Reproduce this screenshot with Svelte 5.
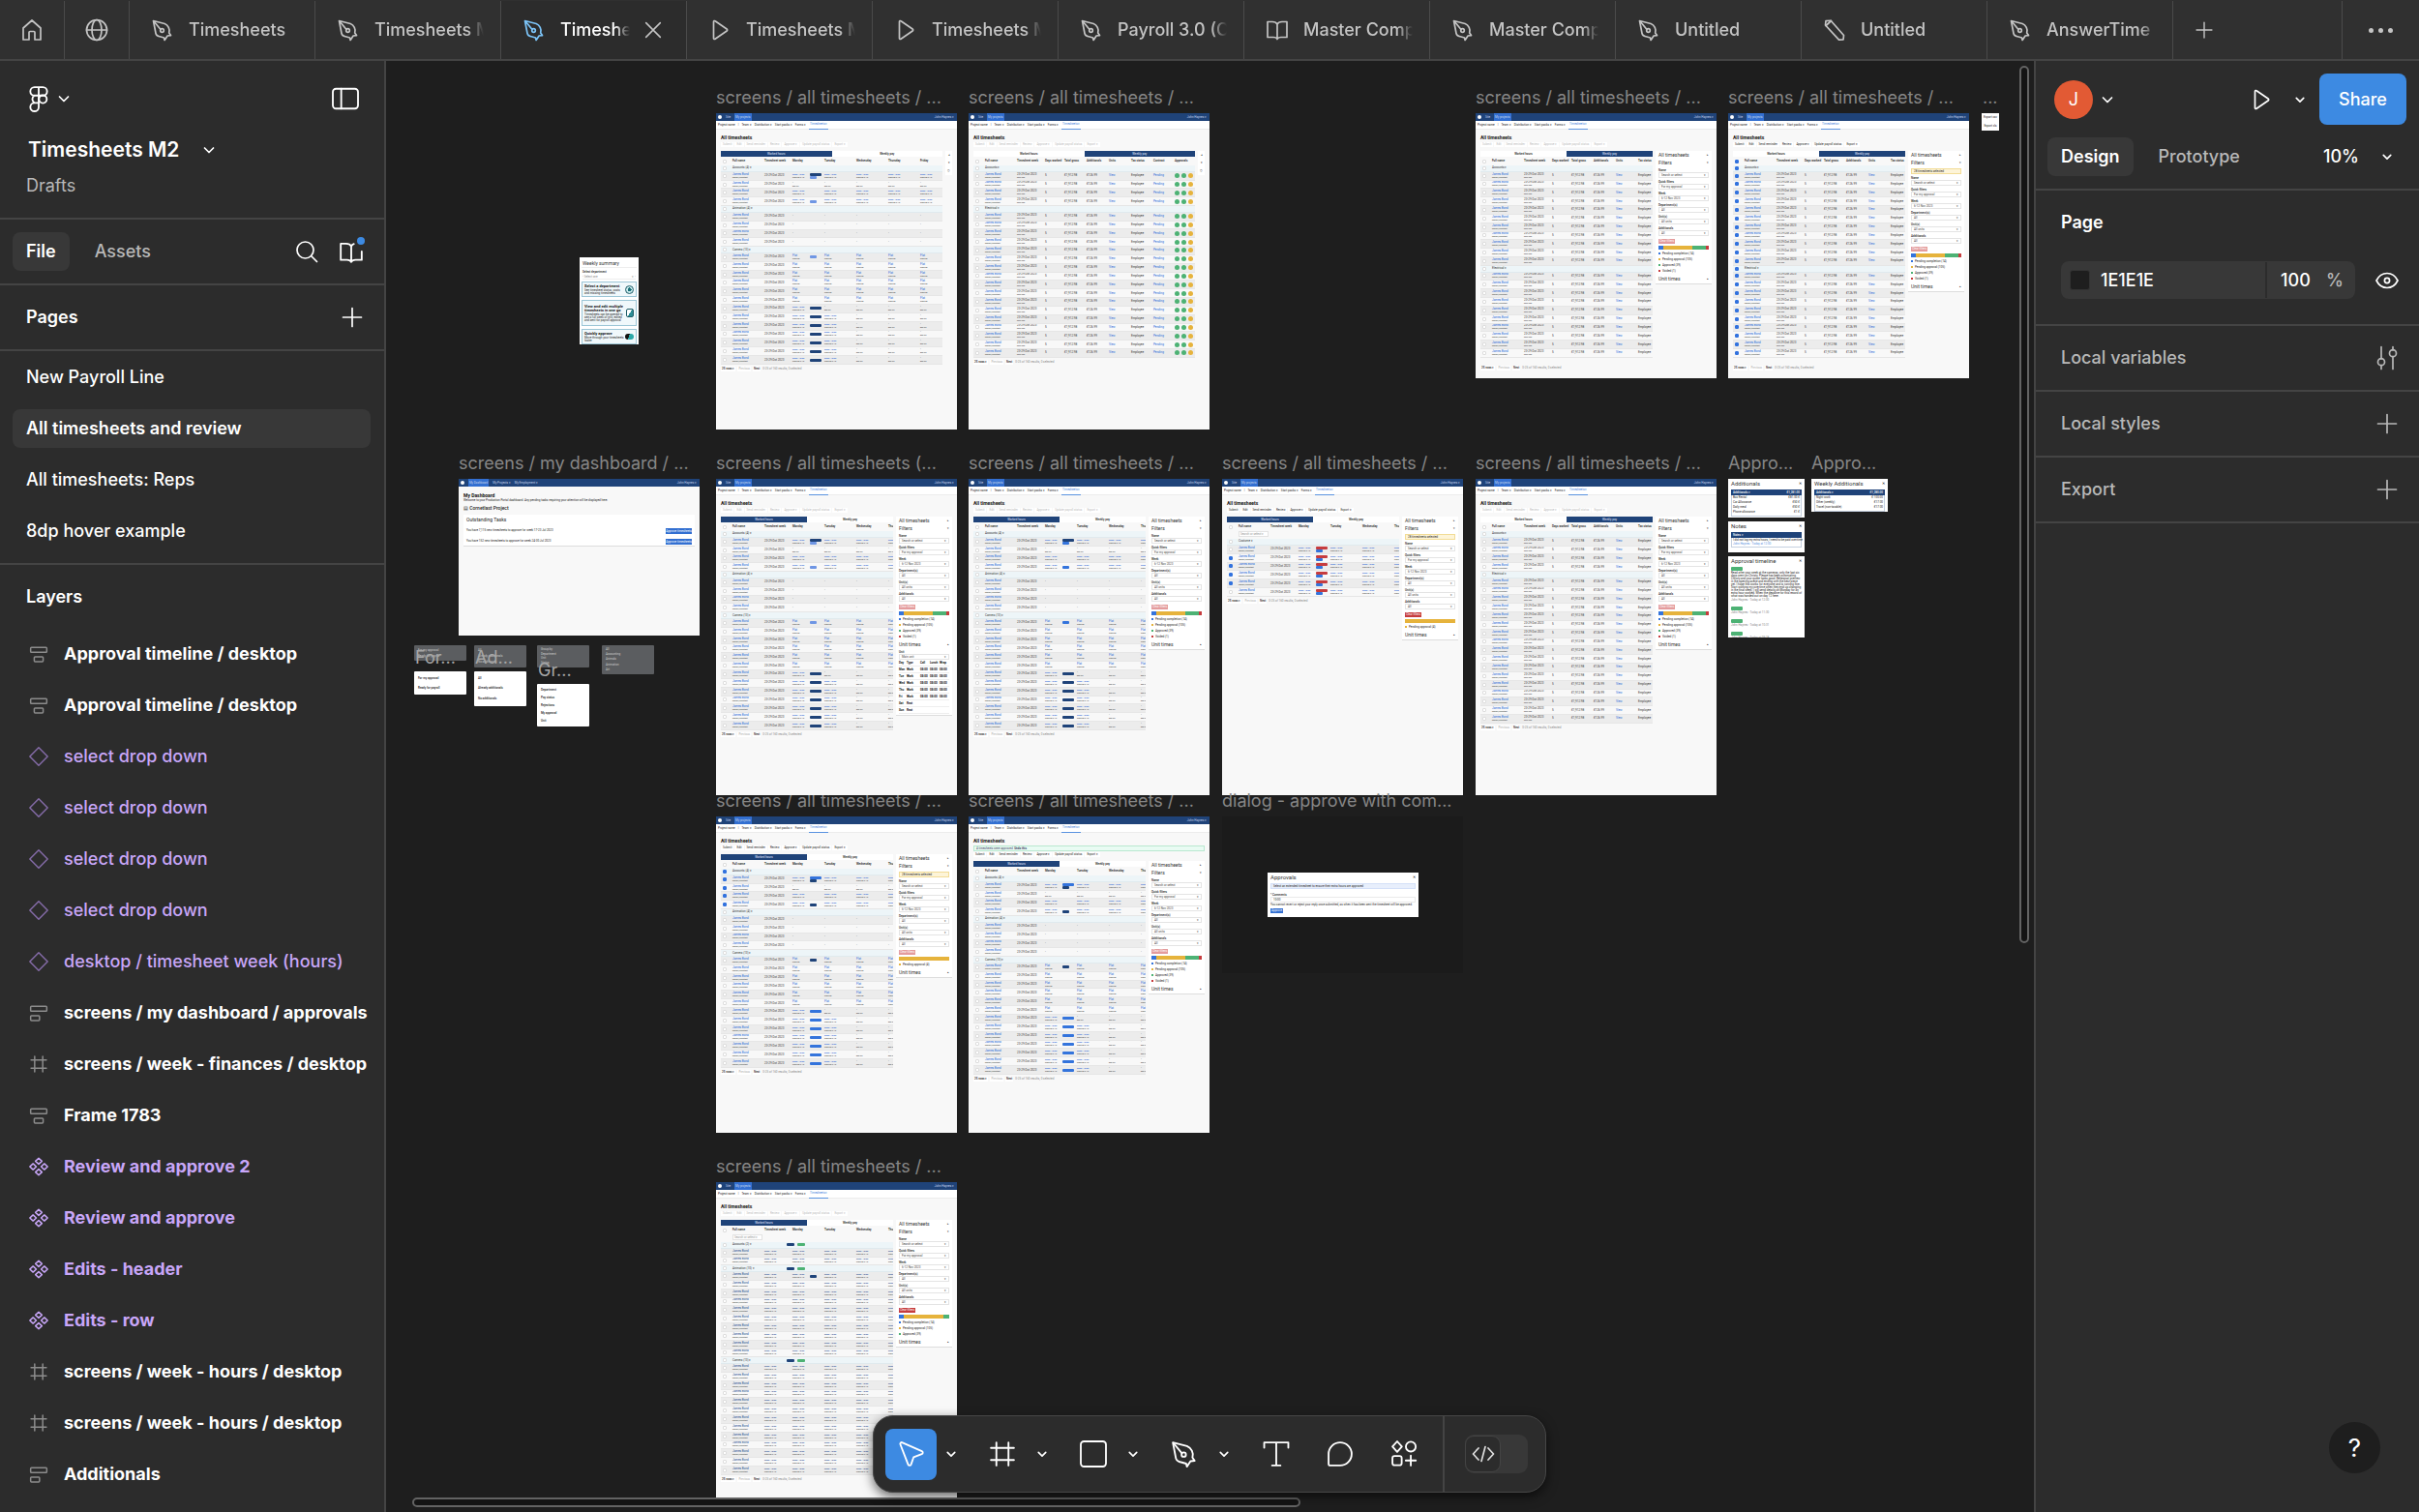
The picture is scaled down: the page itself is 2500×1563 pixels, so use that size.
<script>
  const tabs = [
    { icon: 'pen', label: 'Timesheets' },
    { icon: 'pen', label: 'Timesheets M2' },
    { icon: 'pen', label: 'Timesheets M2', active: true },
    { icon: 'play', label: 'Timesheets M2' },
    { icon: 'play', label: 'Timesheets M2' },
    { icon: 'pen', label: 'Payroll 3.0 (Copy)' },
    { icon: 'book', label: 'Master Components' },
    { icon: 'pen', label: 'Master Components' },
    { icon: 'pen', label: 'Untitled' },
    { icon: 'pencil', label: 'Untitled' },
    { icon: 'pen', label: 'AnswerTime' }
  ];

  const pages = ['New Payroll Line', 'All timesheets and review', 'All timesheets: Reps', '8dp hover example'];
  let currentPage = $state(1);

  const layers = [
    { icon: 'stackCenter', label: 'Approval timeline / desktop', kind: 'frame' },
    { icon: 'stackCenter', label: 'Approval timeline / desktop', kind: 'frame' },
    { icon: 'diamond', label: 'select drop down', kind: 'instance' },
    { icon: 'diamond', label: 'select drop down', kind: 'instance' },
    { icon: 'diamond', label: 'select drop down', kind: 'instance' },
    { icon: 'diamond', label: 'select drop down', kind: 'instance' },
    { icon: 'diamond', label: 'desktop / timesheet week (hours)', kind: 'instance' },
    { icon: 'stackLeft', label: 'screens / my dashboard / approvals', kind: 'frame' },
    { icon: 'hash', label: 'screens / week - finances / desktop', kind: 'frame' },
    { icon: 'stackCenter', label: 'Frame 1783', kind: 'frame' },
    { icon: 'component', label: 'Review and approve 2', kind: 'component' },
    { icon: 'component', label: 'Review and approve', kind: 'component' },
    { icon: 'component', label: 'Edits - header', kind: 'component' },
    { icon: 'component', label: 'Edits - row', kind: 'component' },
    { icon: 'hash', label: 'screens / week - hours / desktop', kind: 'frame' },
    { icon: 'hash', label: 'screens / week - hours / desktop', kind: 'frame' },
    { icon: 'stackLeft', label: 'Additionals', kind: 'frame' }
  ];

  const rep = (n, row) => Array.from({ length: n }, () => ({ ...row }));

  const hourGroups = (tone, small, checked = false) => [
    {
      name: 'Accounts (4)', checked,
      rows: [
        { kind: 'full', badges: [tone, small], checked },
        { kind: 'off', checked },
        { kind: 'full', checked },
        { kind: 'full', badges: [small], short: true, checked }
      ]
    },
    { name: 'Animation (4)', rows: rep(4, { kind: 'empty' }) },
    {
      name: 'Camera (13)',
      rows: [
        { kind: 'flat', badges: [small], short: true },
        ...rep(5, { kind: 'flat' }),
        { kind: 'first', badges: [tone] },
        ...rep(6, { kind: 'second', badges: [tone] })
      ]
    }
  ];
  const payGroups = (a, b, checked = false) => [
    { name: 'Accounts', checked, rows: rep(a, { kind: 'pay', checked }) },
    { name: 'Electrical', checked, rows: rep(b, { kind: 'pay', checked }) }
  ];

  const allLegend = [
    { tone: 'blue', text: 'Pending completion (14)', size: 9 },
    { tone: 'amber', text: 'Pending approval (105)', size: 59 },
    { tone: 'green', text: 'Approved (39)', size: 26 },
    { tone: 'red', text: 'Voided (1)', size: 6 }
  ];
  const amberLegend = [{ tone: 'amber', text: 'Pending approval (4)', size: 100 }];

  const title = 'screens / all timesheets / ...';
  const screens = [
    { x: 341, y: 54, h: 327, title, mode: 'hours', wide: true, groups: hourGroups('navy', 'soft'), rowsHeight: 206 },
    { x: 602, y: 54, h: 327, title, mode: 'pay', wide: true, groups: payGroups(4, 17), rowsHeight: 199 },
    { x: 1126, y: 54, h: 274, title, mode: 'pay', groups: payGroups(11, 10), rowsHeight: 199, legend: allLegend, low: true },
    { x: 1387, y: 54, h: 274, title, mode: 'pay', groups: payGroups(11, 10, true), rowsHeight: 199, legend: allLegend, low: true, enabled: true, notice: true },
    { x: 341, y: 432, h: 327, title: 'screens / all timesheets (...', mode: 'hours', groups: hourGroups('navy', 'soft'), rowsHeight: 206, legend: allLegend, units: true },
    { x: 602, y: 432, h: 327, title, mode: 'hours', groups: hourGroups('navy', 'blue'), rowsHeight: 206, legend: allLegend },
    {
      x: 864, y: 432, h: 327, title, mode: 'hours', enabled: true, notice: true, legend: amberLegend, clear: true, search: true, rowsHeight: 60,
      groups: [{
        name: 'Costume',
        rows: [0, 1, 1, 1, 1, 0].map((c) => ({ kind: 'full', badges: ['red', 'blue'], checked: !!c }))
      }]
    },
    { x: 1126, y: 432, h: 327, title, mode: 'pay', groups: payGroups(4, 17), rowsHeight: 199, legend: allLegend },
    { x: 341, y: 781, h: 327, title, mode: 'hours', groups: hourGroups('blue', 'navy', true), rowsHeight: 206, legend: amberLegend, enabled: true, notice: true },
    { x: 602, y: 781, h: 327, title, mode: 'hours', groups: hourGroups('blue', 'navy'), rowsHeight: 206, legend: allLegend, enabled: true, success: true },
    {
      x: 341, y: 1159, h: 327, title, mode: 'hours', search: true, clear: true, rowsHeight: 241,
      legend: [{ ...allLegend[0] }, { ...allLegend[1], size: 79 }, { ...allLegend[2], size: 12 }],
      groups: [
        { name: 'Accounts (2)', tags: true, rows: rep(2, { kind: 'edit' }) },
        { name: 'Animation (10)', tags: true, rows: [{ kind: 'edit', badges: ['navy'], short: true }, ...rep(9, { kind: 'edit' })] },
        { name: 'Camera (13)', tags: true, rows: rep(13, { kind: 'edit' }) }
      ]
    }
  ];

  const hourHeads = ['Full name', 'Timesheet week', 'Monday', '', 'Tuesday', 'Wednesday', 'Thursday', 'Friday'];
  const payHeads = ['Full name', 'Timesheet week', 'Days worked', 'Total gross', 'Additionals', 'Units', 'Tax status', 'Contract', 'Approvals'];
  const fields = [
    ['Name', 'Search or select'],
    ['Quick filters', 'For my approval'],
    ['Week', '6-12 Nov 2023'],
    ['Department(s)', 'All'],
    ['Unit(s)', 'All units'],
    ['Additionals', 'All']
  ];
  const actions = ['Submit', 'Edit', 'Send reminder', 'Review', 'Approve ▾', 'Update payroll status', 'Export ▾'];

  const menus = [
    { x: 29, y: 604, h: 16, dark: true, items: ['For my approval', 'Ready for payroll'] },
    { x: 91, y: 604, h: 23, dark: true, items: ['All', 'Already additionals', 'No additionals'] },
    { x: 156, y: 604, h: 23, dark: true, items: ['Group by', 'Department', 'Unit', 'Status'] },
    { x: 223, y: 604, h: 30, dark: true, items: ['All', 'Accounting', 'Animals', 'Animation', 'Art'] },
    { x: 29, y: 631, h: 24, items: ['For my approval', 'Ready for payroll'] },
    { x: 91, y: 631, h: 36, items: ['All', 'Already additionals', 'No additionals'] },
    { x: 156, y: 644, h: 44, items: ['Department', 'Pay status', 'Rejections', 'My approval', 'Unit'] }
  ];

  const canvasLabels = [
    { x: 30, y: 605, text: 'For...', over: true },
    { x: 92, y: 605, text: 'Ad...', over: true },
    { x: 157, y: 618, text: 'Gr...', over: true },
    { x: 75, y: 404, text: 'screens / my dashboard / ...' },
    { x: 864, y: 753, text: 'dialog - approve with com...' },
    { x: 1387, y: 404, text: 'Appro...' },
    { x: 1473, y: 404, text: 'Appro...' },
    { x: 1650, y: 26, text: '...' }
  ];

  const icons = {
    pen: '<path d="M2.5 2.5 5 15.500c.3 1.700 2 3 5 3.500l3.500 1 .6 2.500 3-4.500 3.400-.4-1.800-2.600c1.300-4-1-8-4.500-9.500z"/><path d="m3 3 7 8.500"/><circle cx="11.500" cy="12.500" r="1.800"/>',
    play: '<path d="M5.500 3.500v17a1 1 0 0 0 1.600.8l12-8.300a1.200 1.200 0 0 0 0-2l-12-8.300a1 1 0 0 0-1.600.8z"/>',
    book: '<path d="M12 6c-1-2-3-2.500-5-2.500H2v16h6c2 0 3.500.7 4 2 .5-1.300 2-2 4-2h6v-16h-5c-2 0-4 .5-5 2.500zM12 6v15"/>',
    bookNew: '<path d="M12 7c-1-2-3-2.500-5-2.500H2V20h6c2 0 3.500.7 4 2 .5-1.300 2-2 4-2h6v-8M12 7v15M12 7c.6-1.200 1.400-1.900 2.500-2.200"/>',
    pencil: '<path d="m3 2.500 5-.2 13.500 15.200-.5 4.500-4.500.2L2.500 7z"/><path d="M3 7.500 8.500 2.500"/>',
    home: '<path d="M3 10 12 2l9 8v12h-6v-7.500a1 1 0 0 0-1-1h-4a1 1 0 0 0-1 1V22H3z"/>',
    globe: '<circle cx="12" cy="12" r="10.500"/><ellipse cx="12" cy="12" rx="5" ry="10.500"/><path d="M1.500 12h21"/>',
    close: '<path d="m4 4 16 16M20 4 4 20"/>',
    plus: '<path d="M12 2.500v19M2.500 12h19"/>',
    chevron: '<path d="m7.500 10 4.500 4.500 4.500-4.500"/>',
    figma: '<path d="M12 1H8a4 4 0 0 0 0 8h4zM12 1h4a4 4 0 0 1 0 8h-4zM12 9H8a4 4 0 0 0 0 7h4zM8 16a4 4 0 1 0 4 4v-4z"/><circle cx="16" cy="12.500" r="3.700"/>',
    panel: '<rect x="0" y="2.500" width="24" height="19" rx="3"/><path d="M8 2.500v19"/>',
    search: '<circle cx="10.500" cy="10.500" r="8.500"/><path d="m17 17 5.500 5.500"/>',
    stackCenter: '<rect x="2" y="4" width="20" height="6" rx="1"/><rect x="6.500" y="15.500" width="11" height="6" rx="1"/>',
    stackLeft: '<rect x="2" y="4" width="20" height="6" rx="1"/><rect x="2" y="15.500" width="11" height="6" rx="1"/>',
    diamond: '<path d="M12 1 23 12 12 23 1 12z"/>',
    hash: '<path d="M7 2.500v19M17 2.500v19M2.500 7h19M2.500 17h19"/>',
    component: '<path d="m12 1.500 4 3.700-4 3.700-4-3.700zM12 15.100l4 3.700-4 3.700-4-3.700zM5 8.300 9 12l-4 3.700L1 12zM19 8.300l4 3.700-4 3.700L15 12z"/>',
    eye: '<path d="M1 12C3.500 7 7.500 4.500 12 4.500S20.500 7 23 12c-2.500 5-6.500 7.500-11 7.500S3.500 17 1 12z"/><circle cx="12" cy="12" r="2.600"/>',
    sliders: '<path d="M6 .5v12.500M6 19.500v4M18 .5v3.500M18 10.500v13"/><circle cx="6" cy="16.200" r="3.500"/><circle cx="18" cy="7.200" r="3.500"/>',
    cursor: '<path d="M1.500 3.200 8.800 22a1.500 1.500 0 0 0 2.800 0L14 15.200l7.800-3a1.500 1.500 0 0 0 .1-2.800L3.500 1.300a1.400 1.400 0 0 0-2 1.900z"/>',
    rect: '<rect x="0" y="0" width="24" height="24" rx="3"/>',
    type: '<path d="M.5 6V1h23v5M12 1v22M8 23h8"/>',
    comment: '<path d="M1 21.500V12A11 11 0 1 1 12 23H2.500A1.500 1.500 0 0 1 1 21.500z"/>',
    shapes: '<path d="m5.500 0 4.500 5-4.500 5-4.500-5zM18.500 13.500V23M13.700 18.200h9.600"/><circle cx="18.500" cy="5" r="4.700"/><rect x="1" y="14" width="8.800" height="8.800" rx="2"/>',
    code: '<path d="M7 6 1.500 12 7 18M17 6l5.500 6-5.500 6M14 4.500l-4 15"/>'
  };
</script>

{#snippet icon(name, size = 'm')}
  <svg class="icon {size}" viewBox="0 0 24 24" aria-hidden="true">{@html icons[name]}</svg>
{/snippet}

{#snippet times(kind)}
  {#if kind === 'full'}
    <b class="link slot">08:00 - 18:00</b><i>£200.00 x 1.0</i>
  {:else if kind === 'flat'}
    <b class="link">Flat</b><i>£200.00</i>
  {:else if kind === 'off'}
    <b>-</b><i>Day off</i>
  {:else}
    <b>-</b>
  {/if}
{/snippet}

{#snippet screen(s)}
  <article class="node screen" style="left:{s.x}px;top:{s.y}px;height:{s.h}px">
    <div class="s-nav"><span class="logo"></span><span>Site</span><span class="on">My projects</span><span class="who">John Haynes ▾</span></div>
    <div class="s-sub"><span>Project name</span><span>|</span><span>Team ▾</span><span>Distribution ▾</span><span>Start packs ▾</span><span>Forms ▾</span><span class="on">Timesheets ▾</span></div>
    <div class="s-title">All timesheets</div>
    {#if s.success}<div class="s-success">4 timesheets were approved. <b>Undo this</b></div>{/if}
    <div class="s-actions" class:enabled={s.enabled}>{#each actions as a}<span>{a}</span>{/each}</div>
    <div class="s-body">
      <div class="s-main">
        <div class="s-tabs"><span class:on={s.mode === 'hours'}>Worked hours</span><span class:on={s.mode === 'pay'}>Weekly pay</span></div>
        <div class="s-row head {s.mode}">
          <span class="box" class:checked={s.groups[1]?.checked}></span>
          {#each (s.mode === 'pay' ? payHeads : hourHeads).slice(0, s.wide ? 9 : 7) as h}<span class="cell">{h}</span>{/each}
        </div>
        {#if s.search}<div class="s-search"><span>Search or select ▾</span></div>{/if}
        <div class="s-rows" style="height:{s.rowsHeight}px">
          {#each s.groups as g}
            <div class="s-row group {s.mode}">
              <span class="box" class:checked={g.checked}></span><span class="cell">{g.name} ▾</span>
              {#if g.tags}<span class="cell"></span><span class="cell tags"><em class="badge navy"></em><em class="badge green"></em></span>{/if}
            </div>
            {#each g.rows as r, i}
              <div class="s-row line {s.mode}" class:odd={i % 2 === 0} class:deep={r.kind === 'edit'}>
                <span class="box" class:checked={r.checked}></span>
                <span class="cell"><b class="link">James Bond</b><i>Runner/Assistant</i></span>
                {#if r.kind === 'pay'}
                  <span class="cell"><b>23-29 Oct 2023</b><i>Mon-Sun</i></span>
                  <span class="cell"><b>5</b></span>
                  <span class="cell"><b>£1,912.98</b></span>
                  <span class="cell"><b>£126.99</b></span>
                  <span class="cell"><b class="link">View</b></span>
                  <span class="cell"><b>Employee</b></span>
                  {#if s.wide}
                    <span class="cell"><b class="link">Pending</b></span>
                    <span class="cell dots"><em></em><em></em><em class="amber"></em></span>
                  {/if}
                {:else}
                  <span class="cell">{#if r.kind === 'edit'}{@render times('full')}{:else}<b>23-29 Oct 2023</b>{/if}</span>
                  <span class="cell">{@render times(r.kind === 'first' || r.kind === 'second' || r.kind === 'edit' ? 'full' : r.kind)}</span>
                  <span class="cell">{#each r.badges ?? [] as b, n}<em class="badge {b}" class:short={r.short || n > 0}></em>{/each}</span>
                  <span class="cell">{@render times(r.kind === 'second' || r.kind === 'edit' ? 'full' : r.kind === 'first' ? 'off' : r.kind)}</span>
                  {#each s.wide ? [0, 1, 2] : [0, 1] as d}
                    <span class="cell">{@render times(r.kind === 'edit' ? 'full' : r.kind === 'first' || r.kind === 'second' ? 'off' : r.kind)}</span>
                  {/each}
                {/if}
              </div>
            {/each}
          {/each}
        </div>
        <div class="s-foot" class:low={s.low}><span>25 rows ▾</span><span class="dim">Previous</span><span>Next</span><small>0-25 of 160 results, 0 selected</small></div>
      </div>
      {#if s.wide}
        <div class="s-strip"><span>◂</span><span>▾</span><span>◷</span></div>
      {:else}
        <div class="s-side">
          <div class="s-h">All timesheets<span>▸</span></div>
          <div class="s-h">Filters<span>▾</span></div>
          {#if s.notice}<div class="s-notice">28 timesheets selected</div>{/if}
          {#each fields as f}
            <div class="s-field"><b>{f[0]}</b><span>{f[1]}<u>▾</u></span></div>
          {/each}
          <div class="s-clear" class:strong={s.clear}>Clear filters</div>
          <div class="s-bar">{#each s.legend as l}<span class={l.tone} style="flex-grow:{l.size}"></span>{/each}</div>
          {#each s.legend as l}<div class="s-legend"><span class={l.tone}></span>{l.text}</div>{/each}
          <div class="s-h last">Unit times<span>▴</span></div>
          {#if s.units}
            <div class="s-field"><b>Unit</b><span>Main unit<u>▾</u></span></div>
            <div class="s-units">
              {#each ['Day', 'Mon', 'Tue', 'Wed', 'Thu', 'Fri', 'Sat', 'Sun'] as d, i}
                <div><b>{d}</b><b>{i === 0 ? 'Type' : i > 5 ? 'Rest' : 'Work'}</b>{#each ['Call', 'Lunch', 'Wrap'] as c}<span>{i === 0 ? c : i > 5 ? '' : '08:00'}</span>{/each}</div>
              {/each}
            </div>
          {/if}
        </div>
      {/if}
    </div>
  </article>
{/snippet}

<div class="app">
  <header class="tabbar">
    <button class="square" aria-label="Home">{@render icon('home')}</button>
    <button class="square" aria-label="Community">{@render icon('globe')}</button>
    {#each tabs as t}
      <div class="tab" class:active={t.active}>
        <button class="tab-open">{@render icon(t.icon)}<span>{t.label}</span></button>
        {#if t.active}<button class="tab-close" aria-label="Close tab">{@render icon('close')}</button>{/if}
      </div>
    {/each}
    <button class="new-tab" aria-label="New tab">{@render icon('plus', 's')}</button>
    <button class="more" aria-label="More"><span></span><span></span><span></span></button>
  </header>

  <aside class="left">
    <section class="file-head">
      <div class="bar">
        <button class="main-menu" aria-label="Main menu">{@render icon('figma', 'l')}{@render icon('chevron')}</button>
        <button aria-label="Toggle sidebar">{@render icon('panel', 'l')}</button>
      </div>
      <button class="file-name">Timesheets M2 {@render icon('chevron')}</button>
      <a class="drafts" href="#drafts">Drafts</a>
    </section>
    <section class="switch">
      <button class="pill on">File</button>
      <button class="pill">Assets</button>
      <span class="grow"></span>
      <button aria-label="Search">{@render icon('search')}</button>
      <button class="libraries" aria-label="Libraries">{@render icon('bookNew', 'l')}<span class="dot"></span></button>
    </section>
    <section class="pages-head">
      <h2>Pages</h2>
      <button aria-label="Add page">{@render icon('plus')}</button>
    </section>
    <nav class="pages">
      {#each pages as p, i}
        <button class="page" class:on={i === currentPage} onclick={() => (currentPage = i)}>{p}</button>
      {/each}
    </nav>
    <section class="layers">
      <h2>Layers</h2>
      {#each layers as l}
        <button class="layer {l.kind}">{@render icon(l.icon, 's')}<span>{l.label}</span></button>
      {/each}
    </section>
  </aside>

  <main class="canvas">
    {#each screens as s}
      <div class="node label" style="left:{s.x}px;top:{s.y - 28}px">{s.title}</div>
    {/each}
    {#each screens as s}{@render screen(s)}{/each}

    <article class="node dash">
      <div class="s-nav"><span class="logo"></span><span class="on">My Dashboard</span><span>My Projects ▾</span><span>My Employment ▾</span><span class="who">John Haynes ▾</span></div>
      <div class="d-body">
        <h3>My Dashboard</h3>
        <p>Welcome to your Production Portal dashboard. Any pending tasks requiring your attention will be displayed here.</p>
        <h4>▤ Cornetlast Project</h4>
        <div class="d-card">
          <h5>Outstanding Tasks</h5>
          <div><span>You have 7,115 new timesheets to approve for week 17-23 Jul 2023</span><b>Approve timesheets</b></div>
          <div><span>You have 152 new timesheets to approve for week 24-30 Jul 2023</span><b>Approve timesheets</b></div>
        </div>
      </div>
    </article>

    <article class="node weekly">
      <h3>Weekly summary</h3>
      <b>Select department</b>
      <div class="w-select">‹ Select one<span>▾ ›</span></div>
      <div class="w-card"><div><strong>Select a department</strong><p>See timesheet status, costs and missing timesheets</p></div><span class="w-art one"></span></div>
      <div class="w-card tall"><div><strong>View and edit multiple timesheets in one go</strong><p>Timesheets can be opened to see a full week of info, edited and sent for payroll approval</p></div><span class="w-art two"></span></div>
      <div class="w-card"><div><strong>Quickly approve</strong><p>Move through your timesheets faster</p></div><span class="w-art three"></span></div>
    </article>

    <article class="node export"><span>Export csv</span><span>Export xls</span></article>

    {#each menus as m}
      <article class="node menu" class:dark={m.dark} style="left:{m.x}px;top:{m.y}px;height:{m.h}px">
        {#each m.items as it}<span>{it}</span>{/each}
      </article>
    {/each}

    <article class="node card additionals">
      <h3>Additionals<span>✕</span></h3>
      <div class="c-table"><div class="top"><b>Additionals ▾</b><b>£1,281.00</b></div><div><span>Box Rental</span><span>£81.00 £</span></div><div><span>Car Allowance</span><span>£50 £</span></div><div><span>Daily meal</span><span>£50 £</span></div><div><span>Phone allowance</span><span>£1 £</span></div></div>
    </article>
    <article class="node card weekly-additionals">
      <h3>Weekly Additionals<span>✕</span></h3>
      <div class="c-table"><div class="top"><b>Additionals ▾</b><b>£1,280.00</b></div><div><span>Night work</span><span>£ 100.00</span></div><div><span>Other (weekly)</span><span>£17.00</span></div><div><span>Travel (non-taxable)</span><span>£17.00</span></div></div>
    </article>
    <article class="node card notes">
      <h3>Notes<span>✕</span></h3>
      <div class="c-table"><div class="top"><b>Notes ▾</b></div><div><span>I did not log my extra hours, I need to be paid overtime</span></div><div class="meta"><span>John Haynes · Today at 12:00</span></div></div>
    </article>
    <article class="node card timeline">
      <h3>Approval timeline<span>✕</span></h3>
      <em class="badge green"></em>
      <p class="note">Read after your week at the cameras, only the last six days went on Christy. Please has been automating Christy and your quote looks good. Rehearsal preview in the opening scene and ending with the best piece yet. I hope this works for everyone and is running fine. Start working my overtime when they end up changing in the final week, I will send details on Monday for an extra hour worked. When the deadline for this record of what was handed out on day 12 here.</p>
      <p>John Haynes · Today at 12:00</p>
      <em class="badge green"></em><p>John Haynes · Today at 11:30</p>
      <em class="badge green"></em><p>John Haynes · Today at 10:31</p>
      <em class="badge green"></em><p>John Haynes · Today at 09:18</p>
    </article>

    <div class="node backdrop"></div>
    <article class="node dialog">
      <h3>Approvals<span>✕</span></h3>
      <div class="g-note">Select an extended timesheet to ensure their extra hours are approved</div>
      <b>* Comments</b>
      <div class="g-input">10:00</div>
      <p>You cannot revert or reject your reply once submitted, as when it has been sent the timesheet will be approved.</p>
      <em>Approve</em>
    </article>

    {#each canvasLabels as l}
      <div class="node label" class:over={l.over} style="left:{l.x}px;top:{l.y}px">{l.text}</div>
    {/each}

    <div class="scroll vertical"></div>
    <div class="scroll horizontal"></div>

    <div class="toolbar">
      <button class="tool on" aria-label="Move">{@render icon('cursor', 'l')}</button>
      <button class="drop" aria-label="Move tools">{@render icon('chevron', 's')}</button>
      <button class="tool" aria-label="Frame">{@render icon('hash', 'xl')}</button>
      <button class="drop" aria-label="Region tools">{@render icon('chevron', 's')}</button>
      <button class="tool" aria-label="Rectangle">{@render icon('rect', 'l')}</button>
      <button class="drop" aria-label="Shape tools">{@render icon('chevron', 's')}</button>
      <button class="tool" aria-label="Pen">{@render icon('pen', 'xl')}</button>
      <button class="drop last" aria-label="Creation tools">{@render icon('chevron', 's')}</button>
      <button class="tool wide" aria-label="Text">{@render icon('type', 'l')}</button>
      <button class="tool wide" aria-label="Comment">{@render icon('comment', 'l')}</button>
      <button class="tool wide" aria-label="Actions">{@render icon('shapes', 'l')}</button>
      <div class="dev">
        <button class="toggle" role="switch" aria-checked="false" aria-label="Dev Mode"><span>{@render icon('code')}</span></button>
      </div>
    </div>
  </main>

  <aside class="right">
    <section class="r-head">
      <button class="user" aria-label="Account"><span class="avatar">J</span>{@render icon('chevron')}</button>
      <span class="grow"></span>
      <button aria-label="Present">{@render icon('play')}</button>
      <button class="present-more" aria-label="Present options">{@render icon('chevron', 's')}</button>
      <button class="share">Share</button>
    </section>
    <section class="r-tabs">
      <button class="pill on">Design</button>
      <button class="pill">Prototype</button>
      <span class="grow"></span>
      <button class="zoom">10% {@render icon('chevron', 's')}</button>
    </section>
    <section class="r-page">
      <h2>Page</h2>
      <div class="fill">
        <div class="field">
          <span class="swatch"></span>
          <input class="hex" aria-label="Page color" value="1E1E1E" />
          <input class="opacity" aria-label="Opacity" value="100" />
          <span class="unit">%</span>
        </div>
        <button aria-label="Toggle visibility">{@render icon('eye')}</button>
      </div>
    </section>
    <section class="r-row"><h2>Local variables</h2><button aria-label="Open variables">{@render icon('sliders')}</button></section>
    <section class="r-row"><h2>Local styles</h2><button aria-label="Add style">{@render icon('plus')}</button></section>
    <section class="r-row"><h2>Export</h2><button aria-label="Add export">{@render icon('plus')}</button></section>
    <button class="help" aria-label="Help">?</button>
  </aside>
</div>

<style>
  :global(body) { background: #1e1e1e; }
  .app {
    display: grid;
    grid-template: 63px minmax(0, 1fr) / 399px minmax(0, 1fr) 398px;
    height: 100vh;
    overflow: hidden;
    color: #fff;
    font: 18px/24px Inter, "Liberation Sans", sans-serif;
  }
  .app, .app * { box-sizing: border-box; }
  button, input { font: inherit; color: inherit; background: none; border: 0; padding: 0; margin: 0; }
  button { display: inline-flex; align-items: center; justify-content: center; white-space: nowrap; }
  h2 { margin: 0; font: inherit; font-weight: 600; }
  .grow { flex: 1; }
  .icon { width: 24px; height: 24px; flex: none; fill: none; stroke: currentColor; stroke-width: 1.700; stroke-linejoin: round; stroke-linecap: round; overflow: visible; }
  .icon.s { width: 20px; height: 20px; stroke-width: 2; }
  .icon.l { width: 26px; height: 26px; }
  .icon.xl { width: 30px; height: 30px; stroke-width: 1.500; }

  .tabbar { grid-column: 1 / -1; display: flex; padding-top: 1px; background: #303030; border-bottom: 2px solid #444; color: #c4c4c4; }
  .square { width: 67px; border-right: 1px solid #4a4a4a; }
  .tab { display: flex; flex: 0 0 192px; min-width: 0; padding: 0 17px 0 22px; border-right: 1px solid #4a4a4a; }
  .tab-open { flex: 1; min-width: 0; justify-content: flex-start; gap: 15px; font-weight: 500; }
  .tab-open span { flex: 1; overflow: hidden; text-align: left; mask-image: linear-gradient(to right, #000 calc(100% - 16px), transparent); }
  .tab.active { padding-right: 23px; background: #2c2c2c; color: #fff; }
  .tab.active .tab-open .icon { color: #7cc4f8; }
  .tab-close { margin-left: 13px; color: #c4c4c4; }
  .tab-close .icon { width: 22px; height: 22px; }
  .new-tab { width: 64px; }
  .new-tab .icon { stroke-width: 1.700; }
  .more { margin-left: auto; width: 80px; gap: 5px; border-left: 1px solid #4a4a4a; }
  .more span { width: 5px; height: 5px; border-radius: 50%; background: #c4c4c4; }

  .left { display: flex; flex-direction: column; min-height: 0; overflow: hidden; background: #2c2c2c; border-right: 2px solid #444; }
  .left section { border-bottom: 2px solid #444; }
  .file-head { height: 164px; padding: 23px 27px 0 27px; display: flex; flex-direction: column; align-items: flex-start; }
  .bar { display: flex; justify-content: space-between; align-self: stretch; height: 32px; }
  .main-menu { gap: 1px; }
  .file-name { margin-top: 23px; height: 28px; gap: 19px; padding-left: 2px; font-size: 21px; font-weight: 600; }
  .drafts { margin-top: 11px; color: #b8b8b8; text-decoration: none; }
  .switch { display: flex; align-items: center; height: 68px; padding: 0 21px 0 13px; gap: 12px; }
  .pill { height: 40px; padding: 0 14px; border-radius: 8px; color: #b8b8b8; font-weight: 500; }
  .pill.on { background: #383838; color: #fff; font-weight: 600; }
  .libraries { position: relative; margin-left: 9px; }
  .dot { position: absolute; right: -1px; top: -2px; width: 8px; height: 8px; border-radius: 50%; background: #3d8ae2; }
  .pages-head { display: flex; align-items: center; justify-content: space-between; height: 68px; padding: 0 21px 0 27px; }
  .pages { display: flex; flex-direction: column; gap: 13px; height: 221px; padding: 7px 14px 0 13px; border-bottom: 2px solid #444; }
  .page { height: 40px; padding: 0 14px; border-radius: 8px; justify-content: flex-start; flex: none; font-weight: 500; }
  .page.on { background: #383838; font-weight: 600; }
  .left .layers { display: flex; flex-direction: column; padding-top: 21px; border: 0; }
  .layers h2 { padding-left: 27px; margin-bottom: 20px; }
  .layer { height: 53px; flex: none; gap: 16px; padding-left: 30px; justify-content: flex-start; }
  .layer .icon { stroke-width: 1.800; color: #8c8c8c; }
  .layer.frame { font-weight: 700; }
  .layer.instance { color: #c8a6f8; font-weight: 500; }
  .layer.instance .icon { color: #846ba6; }
  .layer.component, .layer.component .icon { color: #c8a6f8; font-weight: 700; }

  .right { display: flex; flex-direction: column; position: relative; background: #2c2c2c; border-left: 2px solid #444; }
  .r-head { display: flex; align-items: center; height: 79px; padding: 0 13px 0 19px; }
  .user { gap: 3px; }
  .avatar { display: grid; place-items: center; width: 40px; height: 40px; border-radius: 50%; background: #e25a34; }
  .present-more { margin: 0 10px 0 18px; }
  .share { width: 90px; height: 53px; border-radius: 8px; background: #3d8ae2; font-weight: 500; }
  .r-tabs { display: flex; align-items: center; gap: 12px; height: 55px; padding: 0 23px 13px 12px; border-bottom: 2px solid #444; }
  .zoom { gap: 19px; font-weight: 500; }
  .r-page { height: 140px; padding: 21px 21px 0 26px; border-bottom: 2px solid #444; }
  .fill { display: flex; align-items: center; justify-content: space-between; margin-top: 28px; }
  .field { display: flex; align-items: center; width: 304px; height: 39px; padding: 0 12px 0 9px; border-radius: 8px; background: #383838; font-weight: 500; }
  .swatch { width: 21px; height: 21px; border-radius: 3px; background: #1e1e1e; border: 1px solid #333; }
  .hex { flex: 1; min-width: 0; height: 37px; padding-left: 11px; border-right: 2px solid #2c2c2c; }
  .opacity { width: 61px; padding-left: 14px; }
  .unit { color: #b8b8b8; }
  .r-row { display: flex; align-items: center; justify-content: space-between; height: 68px; padding: 0 21px 0 26px; border-bottom: 2px solid #444; color: #b8b8b8; }
  .r-row h2 { font-weight: 500; }
  .help { position: absolute; right: 40px; bottom: 40px; width: 53px; height: 53px; border-radius: 50%; background: #1e1e1e; font-size: 26px; }

  .canvas { position: relative; overflow: hidden; background: #1e1e1e; }
  .node { position: absolute; }
  .label { color: #868686; font-size: 18px; white-space: nowrap; }
  .label.over { color: #a6a6a6; }
  .scroll { position: absolute; border: 2px solid #636363; border-radius: 5px; background: #141414; }
  .vertical { right: 5px; top: 5px; width: 10px; height: 907px; }
  .horizontal { left: 27px; bottom: 5px; width: 918px; height: 10px; }
  .toolbar { position: absolute; left: 503px; bottom: 20px; display: flex; align-items: center; height: 80px; padding: 0 18px 0 12px; border: 1px solid #464646; border-radius: 21px; background: #2c2c2c; box-shadow: 0 4px 12px #0009; }
  .tool { width: 53px; height: 53px; border-radius: 8px; }
  .tool.on { background: #3d8ae2; }
  .tool.wide { width: 66px; }
  .drop { width: 41px; padding-right: 12px; }
  .drop.last { width: 36px; padding-right: 7px; }
  .dev { display: flex; align-items: center; height: 78px; margin-left: 7px; padding-left: 21px; border-left: 2px solid #444; }
  .toggle { width: 65px; height: 40px; border-radius: 9px; background: #383838; justify-content: flex-start; color: #ddd; }
  .toggle span { display: grid; place-items: center; width: 37px; height: 38px; border-radius: 9px; border: 1px solid #444; background: #2c2c2c; }

  .screen, .dash, .weekly, .export, .menu, .card, .dialog { overflow: hidden; background: #fff; color: #222; font: 3px/3px Roboto, "Liberation Sans", sans-serif; white-space: nowrap; }
  .screen b, .screen i { font-style: normal; }
  .screen { width: 249px; background: #f8f8f8; }
  .s-nav { display: flex; align-items: center; gap: 4px; height: 8px; padding-left: 2px; background: #1f4379; color: #c9d6ea; }
  .s-nav .logo { width: 4px; height: 4px; border-radius: 50%; background: #fff; }
  .s-nav .on { display: grid; place-items: center; height: 8px; padding: 0 1px; background: #326fd1; }
  .s-nav .who { margin-left: auto; padding-right: 3px; }
  .s-sub { display: flex; align-items: center; gap: 3px; height: 9px; padding-left: 2px; background: #fff; border-bottom: 1px solid #ececec; }
  .s-sub .on { display: grid; place-items: center; height: 9px; padding: 0 1px; border-bottom: 1px solid #5a93e0; color: #3f7fdc; }
  .s-title { height: 6px; margin: 5px 5px 2px; font: 700 5px/6px Roboto, sans-serif; color: #111; }
  .s-success { height: 6px; margin: 1px 5px 1px; padding: 0 2px; border: 1px solid #b9e8d0; background: #e9fbf3; line-height: 4px; color: #446; }
  .s-actions { display: flex; gap: 1px; height: 5px; margin: 0 5px 4px; color: #bbb; }
  .s-actions span { padding: 0 2px; background: #fff; line-height: 5px; }
  .s-actions.enabled { color: #222; }
  .s-body { display: flex; gap: 3px; padding: 0 5px; align-items: flex-start; }
  .s-main { flex: 1; min-width: 0; }
  .s-tabs { display: grid; grid-template-columns: 1fr 1fr; height: 6px; background: #fff; text-align: center; font-weight: 500; line-height: 6px; }
  .s-tabs .on { background: #1f4379; color: #c9d6ea; }
  .s-row { display: grid; align-items: center; overflow: hidden; }
  .s-row.hours { grid-template-columns: 12px 33px 29px 18px 15px 33px 33px 33px 33px; }
  .s-row.pay { grid-template-columns: 12px 33px 29px 20px 23px 23px 23px 23px 22px 22px; }
  .head { height: 9px; font-weight: 500; color: #111; }
  .cell { display: flex; flex-direction: column; min-width: 0; }
  .cell b { font-weight: 400; color: #333; }
  .cell i { font-size: 2px; font-weight: 500; color: #444; }
  .cell .link { color: #1f6ad8; }
  .cell .slot { font-size: 2px; font-weight: 700; }
  .deep .cell .link { color: #1d4f90; }
  .box { width: 4px; height: 4px; margin-left: 2px; border: 1px solid #ddd; border-radius: 1px; background: #fff; }
  .box.checked { background: #3272de; border-color: #3272de; }
  .s-rows { display: flex; flex-direction: column; }
  .group { flex: 65 1 0; min-height: 0; background: #edf5f8; border-bottom: 1px solid #e0eaee; color: #333; }
  .line { flex: 89 1 0; min-height: 0; border-bottom: 1px solid #e6e6e6; }
  .line.odd { background: #ececec; }
  .tags { flex-direction: row; gap: 3px; margin-left: -6px; overflow: visible; width: 30px; }
  .badge { display: block; width: 12px; height: 3px; border-radius: 1px; }
  .badge.short { width: 7px; }
  .tags .badge { width: 8px; flex: none; }
  .navy { background: #1f4379; }
  .blue { background: #3474dc; }
  .soft { background: #6f96e4; }
  .red { background: #c63c3e; }
  .green { background: #4db274; }
  .amber { background: #e6b33c; }
  .dots { flex-direction: row; gap: 2px; }
  .dots em { width: 5px; height: 5px; border-radius: 50%; background: #4db274; flex: none; }
  .dots .amber { background: #e6b33c; }
  .s-search { height: 8px; padding-left: 12px; }
  .s-search span { display: block; width: 31px; height: 6px; padding: 0 1px; border: 1px solid #e3e3e3; background: #fff; line-height: 4px; color: #999; }
  .s-foot { display: flex; align-items: center; gap: 2px; height: 5px; margin-top: 2px; }
  .s-foot.low { margin-top: 8px; }
  .s-foot span { padding: 0 1px; background: #fff; line-height: 5px; font-weight: 500; }
  .s-foot .dim { color: #bbb; }
  .s-foot small { font-size: 3px; color: #888; }
  .s-strip { display: grid; width: 7px; height: 25px; background: #fff; place-items: center; }
  .s-side { width: 58px; padding: 0 3px 1px; background: #fff; border-bottom: 1px solid #ddd; }
  .s-h { display: flex; justify-content: space-between; height: 8px; line-height: 8px; font-size: 5px; color: #333; }
  .s-h span { font-size: 3px; }
  .s-h.last { margin-top: 1px; }
  .s-notice { height: 6px; margin: 2px 0 0; padding: 0 2px; border: 1px solid #f2dc96; background: #fdf4d8; line-height: 4px; }
  .s-field { height: 12px; padding-top: 3px; }
  .s-field b { display: block; font-weight: 500; color: #222; }
  .s-field span { display: flex; justify-content: space-between; height: 6px; padding: 0 2px; border: 1px solid #e4e4e4; line-height: 4px; color: #444; }
  .s-field u { text-decoration: none; }
  .s-clear { width: 17px; height: 5px; margin: 3px 0 2px; background: #e49c9d; color: #fff; line-height: 5px; text-align: center; }
  .s-clear.strong { background: #c63c3e; }
  .s-bar { display: flex; height: 4px; margin-bottom: 1px; }
  .s-bar span { flex-basis: 0; }
  .s-legend { display: flex; align-items: center; gap: 2px; height: 6px; }
  .s-legend span { width: 2px; height: 2px; }
  .s-units div { display: grid; grid-template-columns: 8px 14px 10px 10px 10px; align-items: center; height: 7px; border-bottom: 1px solid #eee; }
  .s-units b, .s-units span { color: #111; font-weight: 700; }

  .dash { left: 75px; top: 432px; width: 249px; height: 162px; background: #f8f8f8; }
  .d-body { padding: 6px 5px 0; }
  .dash h3, .dash h4, .dash h5, .dash p { margin: 0; }
  .dash h3 { font: 700 5px/6px Roboto, sans-serif; color: #111; }
  .dash p { height: 8px; line-height: 5px; }
  .dash h4 { height: 9px; font: 500 5px/5px Roboto, sans-serif; }
  .d-card { height: 33px; padding: 3px; background: #fff; border-bottom: 1px solid #ddd; }
  .dash h5 { height: 8px; font: 400 5px/5px Roboto, sans-serif; }
  .d-card div { display: flex; justify-content: space-between; align-items: center; height: 11px; }
  .d-card b { width: 27px; height: 6px; background: #326fd1; color: #fff; text-align: center; line-height: 6px; font-weight: 400; }

  .weekly { left: 200px; top: 203px; width: 61px; height: 90px; padding: 2px; white-space: normal; }
  .weekly h3 { margin: 0 0 3px; padding: 1px; font: 400 5px/6px Roboto, sans-serif; border-bottom: 1px solid #eee; color: #333; }
  .weekly b { display: block; padding-left: 1px; font-weight: 500; }
  .w-select { display: flex; justify-content: space-between; height: 5px; margin: 1px 1px 2px; color: #888; line-height: 4px; border-bottom: 1px solid #eee; }
  .w-card { display: flex; align-items: center; gap: 1px; height: 16px; padding: 1px 2px; border: 1px solid #9cc6d6; background: #f0f8fb; }
  .w-card div { flex: 1; }
  .w-card.tall { height: 27px; margin: 3px 0; }
  .w-card strong { display: block; font: 700 4px/4px Roboto, sans-serif; color: #111; }
  .w-card p { margin: 1px 0 0; color: #222; }
  .w-art { width: 9px; height: 9px; border: 1px solid #1f5d68; flex: none; }
  .w-art.one { border-radius: 50%; background: radial-gradient(circle, #1b6f77 2px, #c9ebee 2px); }
  .w-art.two { width: 8px; height: 9px; background: linear-gradient(120deg, #fff 50%, #2d8e96 50%); border-radius: 2px; }
  .w-art.three { border: 0; height: 6px; border-radius: 3px; background: linear-gradient(110deg, #111 45%, #2ba8a8 45%); }

  .export { left: 1649px; top: 54px; width: 18px; height: 18px; display: grid; place-items: center; }
  .menu { width: 54px; padding: 2px 4px; display: flex; flex-direction: column; justify-content: space-around; font-weight: 500; border-radius: 1px; }
  .menu.dark { background: #5b5d60; color: #ccc; font-weight: 400; }

  .card { width: 79px; padding: 0 3px; }
  .card h3, .dialog h3 { display: flex; justify-content: space-between; margin: 0; height: 11px; font: 400 6px/10px Roboto, sans-serif; color: #333; }
  .card h3 span, .dialog h3 span { font-size: 4px; color: #000; }
  .card p { margin: 1px 0 5px; height: 3px; color: #888; }
  .card .badge { width: 12px; height: 4px; }
  .card .note { height: auto; margin: 1px 0; white-space: normal; color: #222; }
  .c-table { border: 1px solid #c5d0e0; border-top: 0; padding-bottom: 1px; }
  .c-table div { display: flex; justify-content: space-between; align-items: center; height: 5px; padding: 0 1px; }
  .c-table .top { height: 6px; background: #1f4379; color: #fff; margin: 0 -1px; padding: 0 2px; }
  .c-table .top b { font-weight: 500; }
  .c-table .meta { height: 3px; color: #5a93e0; }
  .additionals { left: 1387px; top: 432px; height: 40px; }
  .weekly-additionals { left: 1473px; top: 432px; height: 34px; }
  .notes { left: 1387px; top: 476px; height: 32px; }
  .timeline { left: 1387px; top: 512px; height: 84px; }

  .backdrop { left: 864px; top: 781px; width: 249px; height: 162px; background: #1b1b1b; }
  .dialog { left: 911px; top: 839px; width: 156px; height: 46px; padding: 0 3px; }
  .g-note { height: 6px; border: 1px solid #d3e0f8; background: #e8effc; line-height: 4px; padding-left: 2px; }
  .dialog b { display: block; margin-top: 5px; font-weight: 500; }
  .g-input { height: 6px; border: 1px solid #eaeaea; line-height: 4px; padding-left: 2px; }
  .dialog p { margin: 1px 0 2px; }
  .dialog em { display: block; width: 13px; height: 5px; background: #326fd1; color: #fff; font-style: normal; line-height: 5px; text-align: center; }
</style>
